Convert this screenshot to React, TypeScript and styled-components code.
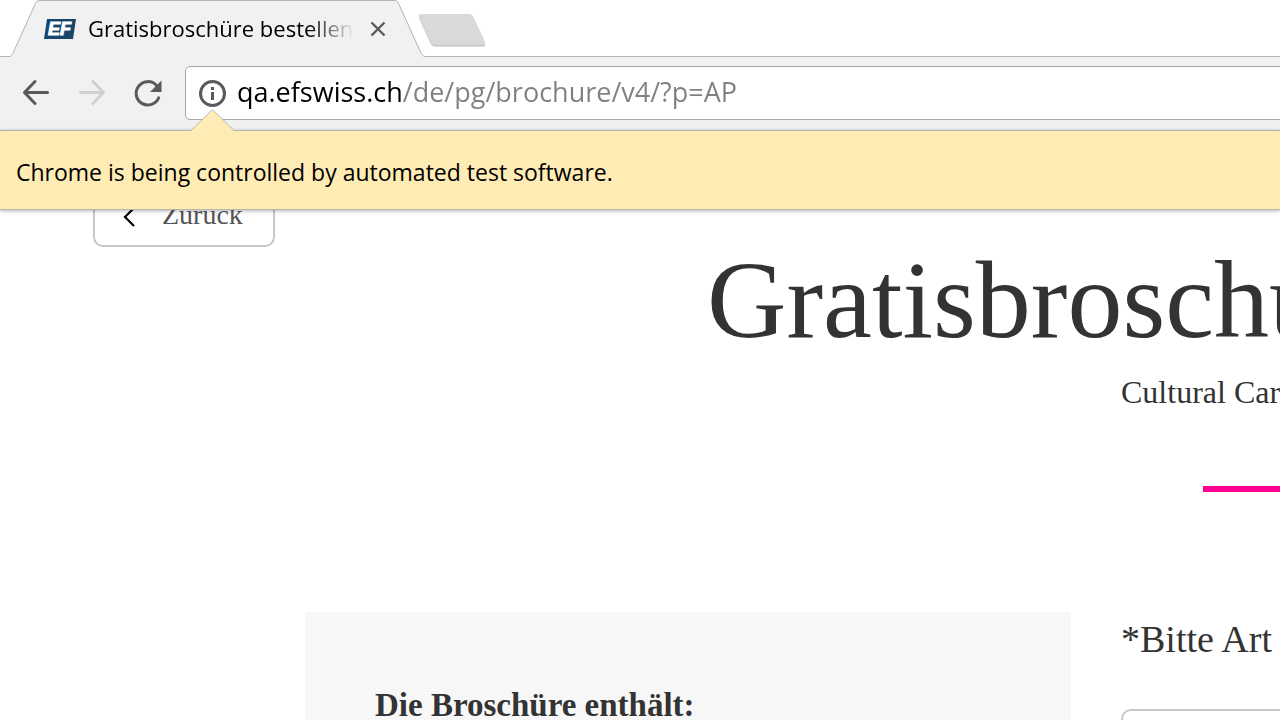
import React, { useState } from 'react';
import styled, { createGlobalStyle } from 'styled-components';

const ui = '"Open Sans", "Noto Sans", sans-serif';
const serif = '"Liberation Serif", "Times New Roman", serif';

const GlobalStyle = createGlobalStyle`
  *, *::before, *::after { box-sizing: border-box; }
  body { margin: 0; background: #fff; }
`;

const BrowserWindow = styled.div`
  display: flex;
  flex-direction: column;
  height: 100vh;
  overflow: hidden;
  font-family: ${ui};
`;

const TabStrip = styled.div`
  display: flex;
  align-items: flex-start;
  height: 57px;
  flex: none;
  border-bottom: 1px solid #b3b3b6;
  background: #fff;
`;

const Tab = styled.div`
  position: relative;
  display: flex;
  align-items: center;
  gap: 12px;
  width: 418px;
  height: 57px;
  margin-left: 9px;
  padding: 0 35px;
`;

const TabShape = styled.svg`
  position: absolute;
  left: 0;
  top: 0;
`;

const Favicon = styled.svg`
  position: relative;
  flex: none;
`;

const TabTitle = styled.span`
  position: relative;
  width: 267px;
  padding-bottom: 2px;
  overflow: hidden;
  white-space: nowrap;
  font-size: 22px;
  line-height: 32px;
  color: #000;
  mask-image: linear-gradient(90deg, #000 220px, transparent 266px);
`;

const IconButton = styled.button<{ $size: number }>`
  position: relative;
  display: flex;
  flex: none;
  align-items: center;
  justify-content: center;
  width: ${(p) => p.$size}px;
  height: ${(p) => p.$size}px;
  padding: 0;
  border: 0;
  background: none;
  color: #5a5a5a;

  &:disabled { color: #d0d0d0; }
`;

const NewTabButton = styled.button`
  display: flex;
  flex: none;
  margin: 12px 0 0 -11px;
  padding: 0;
  border: 0;
  background: none;
`;

const Toolbar = styled.div`
  display: flex;
  align-items: center;
  gap: 16px;
  flex: none;
  height: 73px;
  padding: 0 0 2px 16px;
  background: #f1f1f1;
`;

const AddressBar = styled.div`
  display: flex;
  flex: 1;
  align-items: center;
  gap: 10px;
  height: 54px;
  margin: 0 -4px 0 1px;
  padding-left: 11px;
  border: 1px solid #a6a6a6;
  border-radius: 5px;
  background: #fff;
`;

const AddressInput = styled.input`
  flex: 1;
  min-width: 0;
  height: 40px;
  padding: 0 0 2px;
  border: 0;
  outline: 0;
  font: 27px/38px ${ui};
  color: transparent;
  caret-color: #000;
  background: linear-gradient(90deg, #000 166px, #808080 166px);
  background-clip: text;
`;

const InfoBar = styled.div`
  position: relative;
  z-index: 1;
  display: flex;
  align-items: center;
  flex: none;
  height: 80px;
  padding: 4px 16px 0;
  border-top: 1px solid #b3b3b6;
  border-bottom: 1px solid #b9b6ad;
  background: #ffebb4;
  box-shadow: 0 1px 4px rgba(0, 0, 0, 0.3);
  font-size: 23px;
  line-height: 32px;
  color: #000;
`;

const InfoPointer = styled.svg`
  position: absolute;
  left: 191px;
  top: -22px;
`;

const Page = styled.main`
  flex: 1;
  min-height: 0;
  overflow: hidden;
  font-family: ${serif};
  color: #333;
`;

const PageHeader = styled.header`
  display: flex;
  align-items: flex-start;
  padding-left: 93px;
  white-space: nowrap;
`;

const BackButton = styled.button`
  display: flex;
  flex: none;
  align-items: center;
  gap: 27px;
  width: 182px;
  height: 66px;
  margin-top: -29px;
  padding: 2px 0 0 28px;
  border: 2px solid #c8c8c8;
  border-radius: 10px;
  background: #fff;
  font: 28px/32px ${serif};
  color: #555;
`;

const Titles = styled.div`
  flex: 1;
  min-width: 0;
  padding: 30px 0 120px 432px;
`;

const Title = styled.h1`
  margin: 0;
  font-size: 110px;
  line-height: 120px;
  font-weight: 400;
`;

const Subtitle = styled.p`
  margin: 12px 0 0 414px;
  font-size: 32px;
  line-height: 40px;
`;

const Accent = styled.hr`
  width: 160px;
  height: 6px;
  margin: 74px 0 0 496px;
  border: 0;
  background: #ff0090;
`;

const Columns = styled.div`
  display: grid;
  grid-template-columns: 766px minmax(0, 1fr);
  column-gap: 50px;
  padding-left: 305px;
`;

const Panel = styled.section`
  min-height: 400px;
  padding: 73px 70px;
  background: #f7f7f7;
`;

const PanelTitle = styled.h2`
  margin: 0;
  font-size: 33px;
  line-height: 40px;
  font-weight: 700;
`;

const Form = styled.form`
  display: flex;
  flex-direction: column;
  gap: 48px;
  padding-top: 5px;
  white-space: nowrap;
`;

const FieldLabel = styled.label`
  font-size: 38px;
  line-height: 44px;
`;

const Select = styled.select`
  appearance: none;
  height: 80px;
  margin-right: -20px;
  border: 2px solid #c8c8c8;
  border-radius: 10px;
  background: #fff;
`;

export default function App() {
  const [url, setUrl] = useState('qa.efswiss.ch/de/pg/brochure/v4/?p=AP');

  return (
    <>
      <GlobalStyle />
      <BrowserWindow>
        <TabStrip>
          <Tab>
            <TabShape width="418" height="57" viewBox="0 0 418 57" aria-hidden="true">
              <path
                d="M0 56.500C2 56.500 3 55 4 53L26 4.500C27 2 28 .5 31 .5H385C388 .5 389 2 390 4.500L412 53C413 55 414 56.500 417 56.500V57H0Z"
                fill="#f1f1f1"
              />
              <path
                d="M0 56.500C2 56.500 3 55 4 53L26 4.500C27 2 28 .5 31 .5H385C388 .5 389 2 390 4.500L412 53C413 55 414 56.500 417 56.500"
                fill="none"
                stroke="#b3b3b6"
              />
            </TabShape>
            <Favicon width="32" height="20" viewBox="0 0 32 20" aria-hidden="true">
              <path d="M3 0H32L29 20H0Z" fill="#16466b" />
              <text
                x="4"
                y="16"
                fontFamily="Liberation Sans, sans-serif"
                fontSize="18"
                fontWeight="700"
                fontStyle="italic"
                fill="#fff"
                stroke="#fff"
              >
                EF
              </text>
            </Favicon>
            <TabTitle>Gratisbroschüre bestellen</TabTitle>
            <IconButton $size={28} aria-label="Close tab">
              <svg width="16" height="16" viewBox="0 0 16 16">
                <path d="M1.500 1.500 14.500 14.500M14.500 1.500 1.500 14.500" stroke="currentColor" strokeWidth="2.400" />
              </svg>
            </IconButton>
          </Tab>
          <NewTabButton aria-label="New tab">
            <svg width="72" height="36" viewBox="0 0 72 36">
              <path
                d="M6 3H53Q56 3 57.500 6L69 31Q70 34.500 67 34.500H19Q16 34.500 14.500 31.500L3 6Q2 3 6 3Z"
                fill="#c4c4c4"
              />
              <path
                d="M6 2H53Q56 2 57.500 5L69 30Q70 33 67 33H19Q16 33 14.500 30L3 5Q2 2 6 2Z"
                fill="#d9d9d9"
              />
            </svg>
          </NewTabButton>
        </TabStrip>

        <Toolbar>
          <IconButton $size={40} aria-label="Back">
            <svg width="40" height="40" viewBox="0 0 40 40" fill="none" stroke="currentColor" strokeWidth="3">
              <path d="M8.500 19.500H31.500M19 8.500 8.500 19.500 19 30.500" strokeLinejoin="round" strokeLinecap="round" />
            </svg>
          </IconButton>
          <IconButton $size={40} aria-label="Forward" disabled>
            <svg width="40" height="40" viewBox="0 0 40 40" fill="none" stroke="currentColor" strokeWidth="3">
              <path d="M31.500 19.500H8.500M21 8.500 31.500 19.500 21 30.500" strokeLinejoin="round" strokeLinecap="round" />
            </svg>
          </IconButton>
          <IconButton $size={40} aria-label="Reload">
            <svg width="40" height="40" viewBox="0 0 40 40">
              <path
                d="M30.700 24.800A11.700 11.700 0 1 1 28.500 12.400"
                fill="none"
                stroke="currentColor"
                strokeWidth="3"
                strokeLinecap="round"
              />
              <path d="M33.500 7.500V19H22Z" fill="currentColor" />
            </svg>
          </IconButton>
          <AddressBar>
            <IconButton $size={30} aria-label="Site information">
              <svg width="28" height="28" viewBox="0 0 28 28">
                <circle cx="14.500" cy="14.500" r="12" fill="none" stroke="currentColor" strokeWidth="3" />
                <path d="M13 8h3v3h-3zM13 13h3v8h-3z" fill="currentColor" />
              </svg>
            </IconButton>
            <AddressInput
              aria-label="Address"
              spellCheck={false}
              value={url}
              onChange={(e) => setUrl(e.target.value)}
            />
          </AddressBar>
        </Toolbar>

        <InfoBar role="status">
          <InfoPointer width="44" height="24" viewBox="0 0 44 24" aria-hidden="true">
            <path d="M0 22 21.500 1 43 22V24H0Z" fill="#ffebb4" />
            <path d="M0 21.500 21.500 .5 43 21.500" fill="none" stroke="#b9b6ad" />
          </InfoPointer>
          Chrome is being controlled by automated test software.
        </InfoBar>

        <Page>
          <PageHeader>
            <BackButton>
              <svg width="12" height="24" viewBox="0 0 12 24" fill="none" stroke="#000" strokeWidth="2.200">
                <path d="M11 5 2 14 11 23" />
              </svg>
              Zurück
            </BackButton>
            <Titles>
              <Title>Gratisbroschüre bestellen</Title>
              <Subtitle>Cultural Care Au Pair</Subtitle>
              <Accent />
            </Titles>
          </PageHeader>
          <Columns>
            <Panel>
              <PanelTitle>Die Broschüre enthält:</PanelTitle>
            </Panel>
            <Form>
              <FieldLabel htmlFor="kind">*Bitte Art</FieldLabel>
              <Select id="kind" />
            </Form>
          </Columns>
        </Page>
      </BrowserWindow>
    </>
  );
}
